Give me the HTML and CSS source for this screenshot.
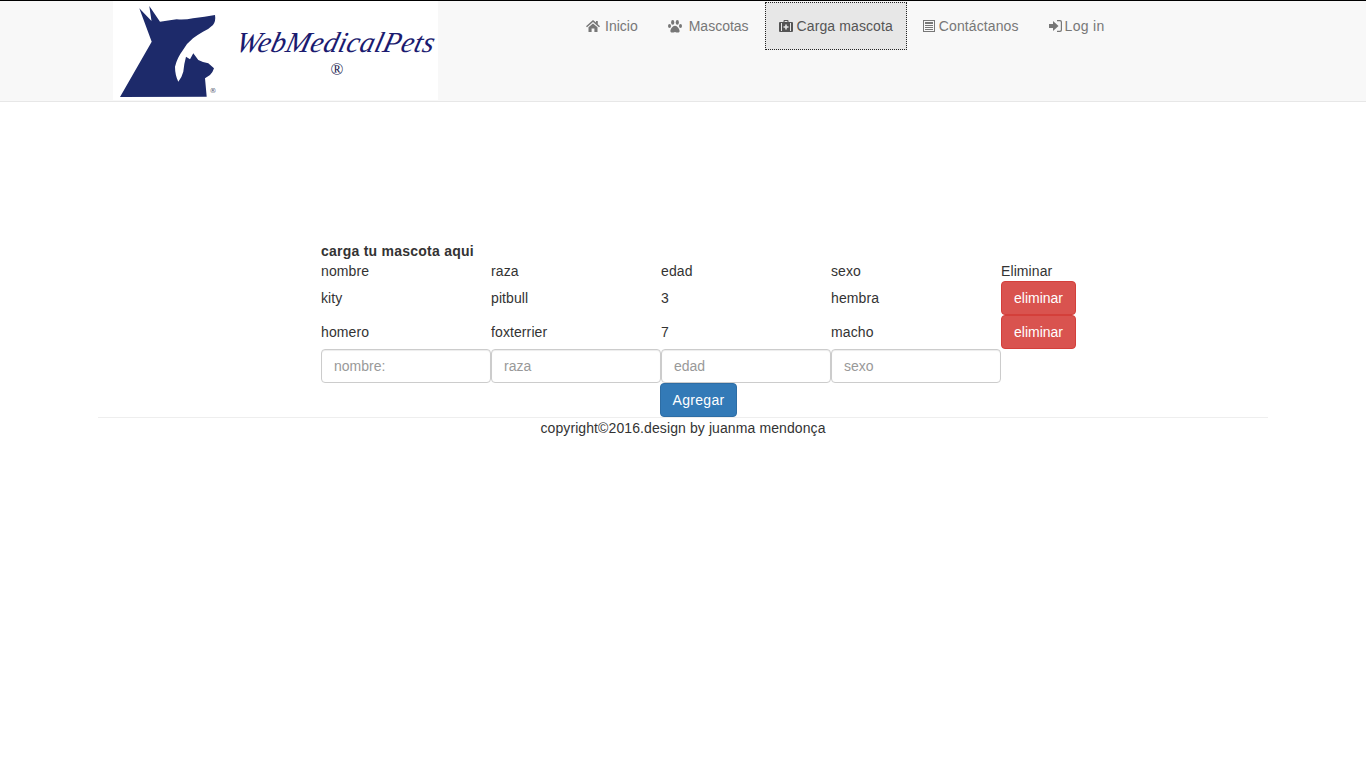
FILE: index.html
```html
<!DOCTYPE html>
<html lang="es">
<head>
<meta charset="utf-8">
<title>WebMedicalPets</title>
<link rel="stylesheet" href="styles.css">
</head>
<body>
<header class="navbar">
  <div class="navbar-inner">
    <a class="logo" href="#">
      <svg class="logo-mark" width="110" height="99" viewBox="0 0 110 99">
        <path fill="#1d2a6a" d="M7 96 L38.7 40.7 L26.3 7.3 L38.5 20 L36.3 5 L47 20.7 Q55 19.5 63.7 18.3 Q72 19 80 17.3 Q92 16 102 14 Q103 20 100 24 Q96 28 90 30.7 Q85 33.5 80 37.3 Q74 42 70 49 Q64 57 62 65.7 Q62 74 65.3 80.7 Q69 76 70.3 70.7 Q71 63 73 55.7 L77 58.3 L80.3 52.3 L85.3 59 Q90 61.5 95.3 62.3 L101 67.3 Q100 71 97 74 L92 77.3 L93.7 95.7 Z"/>
        <text class="logo-tm" x="96.5" y="92">®</text>
      </svg>
      <span class="logo-text">
        <span class="logo-name">WebMedicalPets</span>
        <span class="logo-reg">®</span>
      </span>
    </a>
    <ul class="nav">
      <li><a href="#"><svg class="icon icon-home" viewBox="0 0 14 12"><path d="M7 0 L10 2.6 V1 H11.8 V4.2 L14 6.2 L13 7.2 L7 2 L1 7.2 L0 6.2 Z M2.5 7.2 L7 3.4 L11.5 7.2 V12 H8.4 V8.6 H5.6 V12 H2.5 Z"/></svg>Inicio</a></li>
      <li><a href="#"><svg class="icon icon-paw" viewBox="0 0 14 13"><ellipse cx="4.7" cy="2.4" rx="1.6" ry="2.3"/><ellipse cx="9.3" cy="2.4" rx="1.6" ry="2.3"/><ellipse cx="1.5" cy="6.1" rx="1.5" ry="2"/><ellipse cx="12.5" cy="6.1" rx="1.5" ry="2"/><path d="M7 5.7 C9.4 5.7 11.6 9 11.6 11 C11.6 12.8 9.6 12.9 7 12 C4.4 12.9 2.4 12.8 2.4 11 C2.4 9 4.6 5.7 7 5.7 Z"/></svg>Mascotas</a></li>
      <li class="active nav-wide"><a href="#"><svg class="icon icon-case" viewBox="0 0 14 12"><path fill-rule="evenodd" d="M4.5 2 V1 Q4.5 0 5.5 0 H8.5 Q9.5 0 9.5 1 V2 H13 Q14 2 14 3 V11 Q14 12 13 12 H1 Q0 12 0 11 V3 Q0 2 1 2 Z M5.6 1.1 V2 H8.4 V1.1 Z M3 3 H2 V11 H3 Z M12 3 H11 V11 H12 Z M6.2 4.5 V6.2 H4.5 V7.8 H6.2 V9.5 H7.8 V7.8 H9.5 V6.2 H7.8 V4.5 Z"/></svg>Carga mascota</a></li>
      <li class="nav-wide"><a href="#"><svg class="icon icon-news" viewBox="0 0 12 12"><path fill-rule="evenodd" d="M0 0 H12 V12 H0 Z M1 1 V11 H11 V1 Z M2 2 H10 V4 H2 Z M2 5 H10 V6 H2 Z M2 7 H10 V8 H2 Z M2 9 H10 V10 H2 Z"/></svg>Contáctanos</a></li>
      <li class="nav-login"><a href="#"><svg class="icon icon-login" viewBox="0 0 13 12"><path d="M0 4 H4 V1 L9.5 6 L4 11 V8 H0 Z M8 0 H11 Q13 0 13 2 V10 Q13 12 11 12 H8 V10.8 H10.8 Q11.8 10.8 11.8 9.8 V2.2 Q11.8 1.2 10.8 1.2 H8 Z"/></svg>Log in</a></li>
    </ul>
  </div>
</header>
<main class="container">
  <section class="pets">
    <table class="pets-table">
      <colgroup>
        <col class="col-data"><col class="col-data"><col class="col-data"><col class="col-data"><col class="col-action">
      </colgroup>
      <tbody>
        <tr><th colspan="5">carga tu mascota aqui</th></tr>
        <tr><td>nombre</td><td>raza</td><td>edad</td><td>sexo</td><td>Eliminar</td></tr>
        <tr><td>kity</td><td>pitbull</td><td>3</td><td>hembra</td><td><button class="btn btn-danger" type="button">eliminar</button></td></tr>
        <tr><td>homero</td><td>foxterrier</td><td>7</td><td>macho</td><td><button class="btn btn-danger" type="button">eliminar</button></td></tr>
        <tr>
          <td><input class="field" type="text" placeholder="nombre:"></td>
          <td><input class="field" type="text" placeholder="raza"></td>
          <td><input class="field" type="text" placeholder="edad"></td>
          <td><input class="field" type="text" placeholder="sexo"></td>
          <td></td>
        </tr>
      </tbody>
    </table>
    <div class="actions"><button class="btn btn-primary" type="button">Agregar</button></div>
  </section>
  <footer class="footer">copyright©2016.design by juanma mendonça</footer>
</main>
</body>
</html>
```

FILE: styles.css
```css
* { box-sizing: border-box; }

html, body { margin: 0; padding: 0; }

body {
  background: #fff;
  color: #333;
  font-family: "Liberation Sans", Arial, sans-serif;
  font-size: 14px;
  line-height: 20px;
  letter-spacing: .1px;
}

.navbar {
  height: 102px;
  background: #f8f8f8;
  border-top: 1px solid #000;
  border-bottom: 1px solid #e7e7e7;
}

.navbar-inner {
  width: 1170px;
  margin: 0 auto;
  padding-left: 15px;
  display: flex;
  align-items: flex-start;
}

.logo {
  width: 325px;
  height: 99px;
  background: #fff;
  display: flex;
  text-decoration: none;
  flex: none;
}

.logo-mark { flex: none; margin-right: 14px; }

.logo-tm {
  font-family: "DejaVu Sans", sans-serif;
  font-size: 7px;
  fill: #555a70;
  letter-spacing: 0;
}

.logo-text {
  width: 198px;
  padding-top: 26px;
  display: flex;
  flex-direction: column;
  align-items: center;
  color: #1b1b70;
}

.logo-name {
  font-family: "Liberation Serif", serif;
  font-style: italic;
  font-size: 29px;
  line-height: 30px;
  letter-spacing: .3px;
  white-space: nowrap;
  transform: skewX(-14deg);
}

.logo-reg {
  font-family: "Liberation Serif", serif;
  font-size: 17px;
  line-height: 16px;
  margin: 5px 0 0 2px;
  letter-spacing: 0;
  color: #1b1b50;
}

.nav {
  list-style: none;
  margin: 0 0 0 133px;
  padding: 0;
  display: flex;
}

.nav a {
  display: block;
  padding: 15px;
  color: #777;
  letter-spacing: 0;
  text-decoration: none;
  white-space: nowrap;
}

.nav-wide a { letter-spacing: .1px; }

.nav-login a { letter-spacing: .3px; }

.nav .active a {
  height: 48px;
  margin: 1px 1px 0;
  padding: 14px;
  background: #e7e7e7;
  color: #555;
  outline: 1px dotted #222;
  outline-offset: -1px;
}

.icon {
  display: inline-block;
  height: 12px;
  vertical-align: -1px;
  fill: currentColor;
}

.icon-home { width: 14px; margin-right: 5px; }
.icon-paw { width: 14px; height: 13px; margin-right: 7px; vertical-align: -2px; }
.icon-case { width: 14px; margin-right: 4px; }
.icon-news { width: 12px; margin-right: 4px; }
.icon-login { width: 13px; margin-right: 3px; }

.container {
  width: 1170px;
  margin: 0 auto;
}

.pets {
  width: 755px;
  margin: 139px 0 0 223px;
}

.pets-table {
  border-collapse: collapse;
  border-spacing: 0;
  table-layout: fixed;
  width: 755px;
}

.col-data { width: 170px; }
.col-action { width: 75px; }

.pets-table td, .pets-table th {
  padding: 0;
  text-align: left;
  vertical-align: middle;
}

.pets-table th { font-weight: 700; letter-spacing: .24px; }

.btn {
  display: block;
  height: 34px;
  padding: 6px 12px;
  border: 1px solid transparent;
  border-radius: 4px;
  color: #fff;
  font: inherit;
  line-height: 20px;
}

.btn-danger { background: #d9534f; border-color: #d43f3a; letter-spacing: 0; width: 75px; }

.btn-primary { background: #337ab7; border-color: #2e6da4; margin: 0 auto; width: 77px; padding: 6px 0; letter-spacing: .3px; }

.field {
  display: block;
  width: 170px;
  height: 34px;
  padding: 6px 12px;
  border: 1px solid #ccc;
  border-radius: 4px;
  background: #fff;
  color: #555;
  font: inherit;
  letter-spacing: 0;
  box-shadow: inset 0 1px 1px rgba(0, 0, 0, .075);
}

.field::placeholder { color: #999; opacity: 1; }

.actions { display: flex; }

.footer {
  border-top: 1px solid #eee;
  text-align: center;
  height: 21px;
}
```
